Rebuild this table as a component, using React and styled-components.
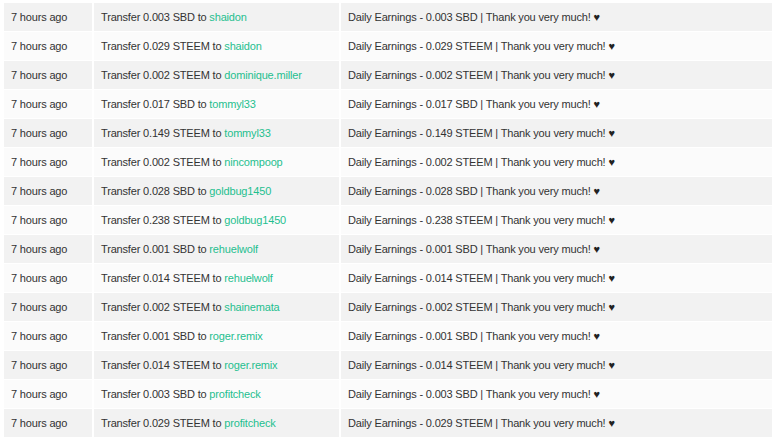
import styled, { createGlobalStyle } from 'styled-components';

const GlobalStyle = createGlobalStyle`
  body {
    margin: 0;
    background: #ffffff;
    font-family: "Liberation Sans", Arial, sans-serif;
  }
`;

const HistoryWrap = styled.div`
  padding: 3px 0 0 4px;
  overflow: hidden;
`;

const HistoryTable = styled.div`
  display: flex;
  flex-direction: column;
  gap: 1px;
`;

const HistoryRow = styled.div`
  display: grid;
  grid-template-columns: 88px 245px 1fr;
  column-gap: 2px;
  height: 28px;

  & > div {
    background-color: ${(p) => (p.$odd ? '#f2f2f2' : '#fbfbfb')};
  }
`;

const Cell = styled.div`
  display: flex;
  align-items: center;
  padding: 0 0 1px 7px;
  font-size: 11px;
  letter-spacing: -0.17px;
  color: #333333;
  white-space: pre;
`;

const UserLink = styled.a`
  color: #1fbf8f;
  text-decoration: none;
`;

const Heart = styled.span`
  font-size: 11px;
  color: #222222;
`;

const transfers = [
  ['0.003', 'SBD', 'shaidon'],
  ['0.029', 'STEEM', 'shaidon'],
  ['0.002', 'STEEM', 'dominique.miller'],
  ['0.017', 'SBD', 'tommyl33'],
  ['0.149', 'STEEM', 'tommyl33'],
  ['0.002', 'STEEM', 'nincompoop'],
  ['0.028', 'SBD', 'goldbug1450'],
  ['0.238', 'STEEM', 'goldbug1450'],
  ['0.001', 'SBD', 'rehuelwolf'],
  ['0.014', 'STEEM', 'rehuelwolf'],
  ['0.002', 'STEEM', 'shainemata'],
  ['0.001', 'SBD', 'roger.remix'],
  ['0.014', 'STEEM', 'roger.remix'],
  ['0.003', 'SBD', 'profitcheck'],
  ['0.029', 'STEEM', 'profitcheck'],
];

function App() {
  return (
    <>
      <GlobalStyle />
      <HistoryWrap>
        <HistoryTable>
          {transfers.map(([amount, coin, user], i) => (
            <HistoryRow key={i} $odd={i % 2 === 0}>
              <Cell>7 hours ago</Cell>
              <Cell>
                {`Transfer ${amount} ${coin} to `}
                <UserLink href="#">{user}</UserLink>
              </Cell>
              <Cell>
                {`Daily Earnings - ${amount} ${coin} | Thank you very much! `}
                <Heart>♥</Heart>
              </Cell>
            </HistoryRow>
          ))}
        </HistoryTable>
      </HistoryWrap>
    </>
  );
}

export default App;
